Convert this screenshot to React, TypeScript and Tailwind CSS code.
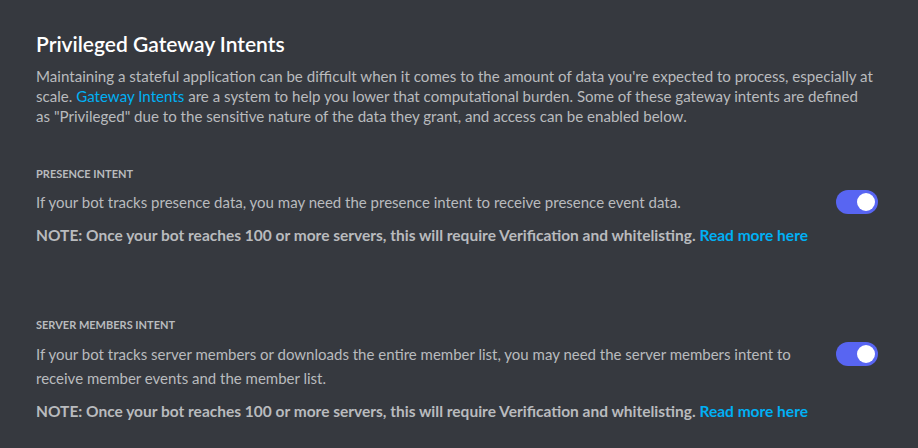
import React, { useState } from 'react';

function Toggle({ on, onChange }: { on: boolean; onChange: () => void }) {
  return (
    <button
      onClick={onChange}
      className={`relative h-6 w-[42px] shrink-0 rounded-full transition-colors ${on ? 'bg-[#5865f2]' : 'bg-[#72767d]'}`}
    >
      <span
        className={`absolute top-[3px] h-[18px] w-[18px] rounded-full bg-white transition-all ${on ? 'left-[21px]' : 'left-[3px]'}`}
      />
    </button>
  );
}

function Note() {
  return (
    <p className="mt-[12px] text-[15.5px] font-bold leading-[18px] text-[#b9bbbe]">
      NOTE: Once your bot reaches 100 or more servers, this will require Verification and whitelisting.{' '}
      <a href="#" className="text-[#00b0f4]">Read more here</a>
    </p>
  );
}

export default function App() {
  const [presence, setPresence] = useState(true);
  const [members, setMembers] = useState(true);

  return (
    <div
      className="min-h-[448px] w-full bg-[#36393f] pl-9 pr-9 pt-[32px]"
      style={{ fontFamily: 'Lato, "Noto Sans", sans-serif' }}
    >
      <h2 className="text-[21px] font-semibold leading-6 text-white">Privileged Gateway Intents</h2>
      <p className="mt-[10px] text-[15.1px] leading-[20px] text-[#b9bbbe]">
        Maintaining a stateful application can be difficult when it comes to the amount of data you're expected to process, especially at scale.{' '}
        <a href="#" className="text-[#00b0f4]">Gateway Intents</a> are a system to help you lower that computational burden. Some of these gateway intents are defined as{'\u00a0'}"Privileged" due to the sensitive nature of the data they grant, and access can be enabled below.
      </p>

      {/* Presence */}
      <section className="mt-[40px]">
        <h3 className="text-[11px] font-bold uppercase leading-4 text-[#b9bbbe]">Presence Intent</h3>
        <div className="mt-[8px] flex items-start justify-between gap-8 pr-1">
          <p className="text-[15px] leading-6 text-[#b9bbbe]">
            If your bot tracks presence data, you may need the presence intent to receive presence event data.
          </p>
          <Toggle on={presence} onChange={() => setPresence(!presence)} />
        </div>
        <Note />
      </section>

      {/* Server members */}
      <section className="mt-[73px]">
        <h3 className="text-[11px] font-bold uppercase leading-4 text-[#b9bbbe]">Server Members Intent</h3>
        <div className="mt-[9px] flex items-start justify-between gap-8 pr-1">
          <p className="max-w-[766px] text-[15px] leading-6 text-[#b9bbbe]">
            If your bot tracks server members or downloads the entire member list, you may need the server members intent to receive member events and the member list.
          </p>
          <Toggle on={members} onChange={() => setMembers(!members)} />
        </div>
        <Note />
      </section>
    </div>
  );
}
